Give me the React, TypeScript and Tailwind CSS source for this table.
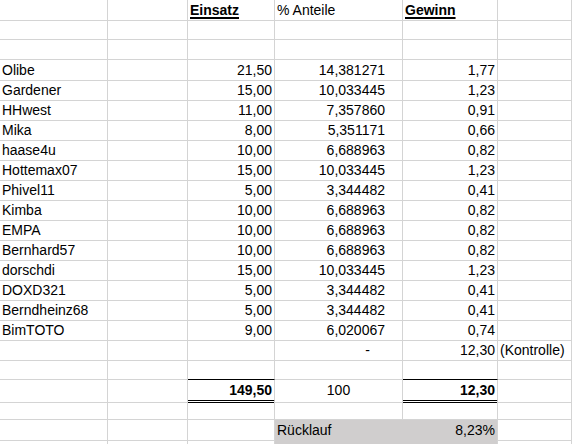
type Cell = { t?: string; c?: string };
type Row = { h?: string; cells: Cell[] };

const players: [string, string, string, string][] = [
  ['Olibe', '21,50', '14,381271', '1,77'],
  ['Gardener', '15,00', '10,033445', '1,23'],
  ['HHwest', '11,00', '7,357860', '0,91'],
  ['Mika', '8,00', '5,351171', '0,66'],
  ['haase4u', '10,00', '6,688963', '0,82'],
  ['Hottemax07', '15,00', '10,033445', '1,23'],
  ['Phivel11', '5,00', '3,344482', '0,41'],
  ['Kimba', '10,00', '6,688963', '0,82'],
  ['EMPA', '10,00', '6,688963', '0,82'],
  ['Bernhard57', '10,00', '6,688963', '0,82'],
  ['dorschdi', '15,00', '10,033445', '1,23'],
  ['DOXD321', '5,00', '3,344482', '0,41'],
  ['Berndheinz68', '5,00', '3,344482', '0,41'],
  ['BimTOTO', '9,00', '6,020067', '0,74'],
];

const empty = (): Cell[] => [{}, {}, {}, {}, {}, {}];

const rows: Row[] = [
  {
    cells: [
      {},
      {},
      { t: 'Einsatz', c: 'font-bold underline underline-offset-[2px] decoration-[1.5px]' },
      { t: '% Anteile' },
      { t: 'Gewinn', c: 'font-bold underline underline-offset-[2px] decoration-[1.5px]' },
      {},
    ],
  },
  { cells: empty() },
  { cells: empty() },
  ...players.map(([name, einsatz, anteil, gewinn]) => ({
    cells: [
      { t: name },
      {},
      { t: einsatz, c: 'text-right' },
      { t: anteil, c: 'text-right pr-[17px]' },
      { t: gewinn, c: 'text-right' },
      {},
    ],
  })),
  {
    cells: [
      {},
      {},
      {},
      { t: '-', c: 'text-right pr-[32px]' },
      { t: '12,30', c: 'text-right' },
      { t: '(Kontrolle)', c: 'pl-[2px]' },
    ],
  },
  {
    cells: [{}, {}, { c: 'border-b-black' }, {}, { c: 'border-b-black' }, {}],
  },
  {
    h: 'h-[21px]',
    cells: [
      {},
      {},
      { t: '149,50', c: 'text-right font-bold border-b-[3px] border-double border-b-black' },
      { t: '100', c: 'text-center' },
      { t: '12,30', c: 'text-right font-bold border-b-[3px] border-double border-b-black' },
      {},
    ],
  },
  { h: 'h-[19px]', cells: empty() },
  {
    cells: [
      {},
      {},
      {},
      { t: 'Rücklauf', c: 'bg-[#d0cece] border-r-[#d0cece] border-b-[#d0cece]' },
      { t: '8,23%', c: 'text-right bg-[#d0cece] border-b-[#d0cece]' },
      {},
    ],
  },
  {
    cells: [
      {},
      {},
      {},
      { c: 'bg-[#d0cece] border-r-[#d0cece]' },
      { c: 'bg-[#d0cece]' },
      {},
    ],
  },
];

export default function App() {
  return (
    <div
      className="w-[572px] h-[444px] overflow-hidden bg-white text-black text-[14px]"
      style={{ fontFamily: '"Liberation Sans", Arial, sans-serif' }}
    >
      {rows.map((row, i) => (
        <div
          key={i}
          className={`grid grid-cols-[108px_80px_87px_128px_95px_1fr] ${row.h ?? 'h-[20px]'}`}
        >
          {row.cells.map((cell, j) => (
            <div
              key={j}
              className={`h-full border-r border-b border-[#d4d4d4] px-[2px] pt-px leading-[19px] whitespace-nowrap ${cell.c ?? ''}`}
            >
              {cell.t}
            </div>
          ))}
        </div>
      ))}
    </div>
  );
}
